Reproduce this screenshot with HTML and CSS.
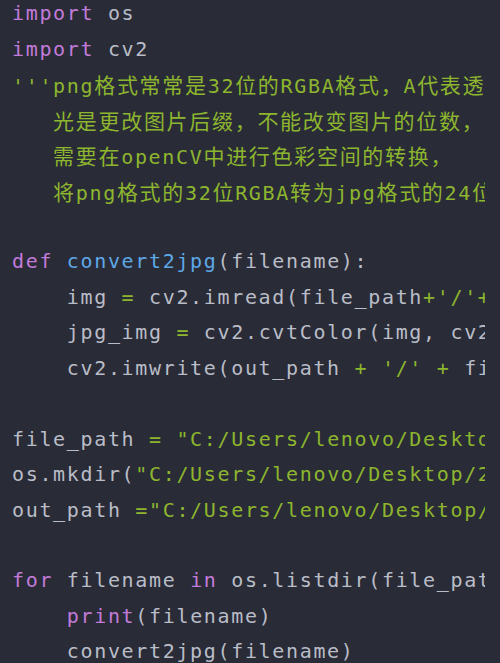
FILE: index.html
```html
<!DOCTYPE html>
<html lang="zh-CN">
<head>
<meta charset="utf-8">
<title>convert2jpg.py</title>
<link rel="stylesheet" href="styles.css">
</head>
<body>
<main class="editor">
  <div class="code">
    <div class="line"><span class="kw">import</span> os</div>
    <div class="line"><span class="kw">import</span> cv2</div>
    <div class="line str">'''png<span class="cjk">格式常常是</span>32<span class="cjk">位的</span>RGBA<span class="cjk">格式，</span>A<span class="cjk">代表透明度，</span></div>
    <div class="line str">   <span class="cjk">光是更改图片后缀，不能改变图片的位数，</span></div>
    <div class="line str">   <span class="cjk">需要在</span>openCV<span class="cjk">中进行色彩空间的转换，</span></div>
    <div class="line str">   <span class="cjk">将</span>png<span class="cjk">格式的</span>32<span class="cjk">位</span>RGBA<span class="cjk">转为</span>jpg<span class="cjk">格式的</span>24<span class="cjk">位</span>'''</div>
    <div class="line"> </div>
    <div class="line"><span class="kw">def</span> <span class="fn">convert2jpg</span>(filename):</div>
    <div class="line">    img <span class="op">=</span> cv2.imread(file_path<span class="op">+</span><span class="str">'/'</span><span class="op">+</span>filename)</div>
    <div class="line">    jpg_img <span class="op">=</span> cv2.cvtColor(img, cv2.COLOR_RGBA2RGB)</div>
    <div class="line">    cv2.imwrite(out_path <span class="op">+</span> <span class="str">'/'</span> <span class="op">+</span> filename[:-4] <span class="op">+</span> <span class="str">'.jpg'</span>, jpg_img)</div>
    <div class="line"> </div>
    <div class="line">file_path <span class="op">=</span> <span class="str">"C:/Users/lenovo/Desktop/1"</span></div>
    <div class="line">os.mkdir(<span class="str">"C:/Users/lenovo/Desktop/2"</span>)</div>
    <div class="line">out_path <span class="op">=</span><span class="str">"C:/Users/lenovo/Desktop/2"</span></div>
    <div class="line"> </div>
    <div class="line"><span class="kw">for</span> filename <span class="kw">in</span> os.listdir(file_path):</div>
    <div class="line">    <span class="kw">print</span>(filename)</div>
    <div class="line">    convert2jpg(filename)</div>
  </div>
</main>
</body>
</html>
```
FILE: styles.css
```css
html, body {
  margin: 0;
  padding: 0;
  background: #292b37;
}

.editor {
  width: 500px;
  height: 663px;
  overflow: hidden;
  background: #292b37;
  padding-left: 12px;
  box-sizing: border-box;
}

.code {
  width: 473px;
  overflow: hidden;
  margin-top: -3.6px;
  font-family: "DejaVu Sans Mono", monospace;
  font-size: 20px;
  letter-spacing: 1.66px;
  color: #b9bdc7;
}

.line {
  height: 35.45px;
  line-height: 35.45px;
  white-space: pre;
}

.kw { color: #c27bd9; }
.fn { color: #5ea8e6; }
.op { color: #8db62e; }
.str { color: #8db62e; }

.cjk {
  font-family: "Noto Sans CJK SC", sans-serif;
  font-size: 21px;
  letter-spacing: 1.7px;
}
```
